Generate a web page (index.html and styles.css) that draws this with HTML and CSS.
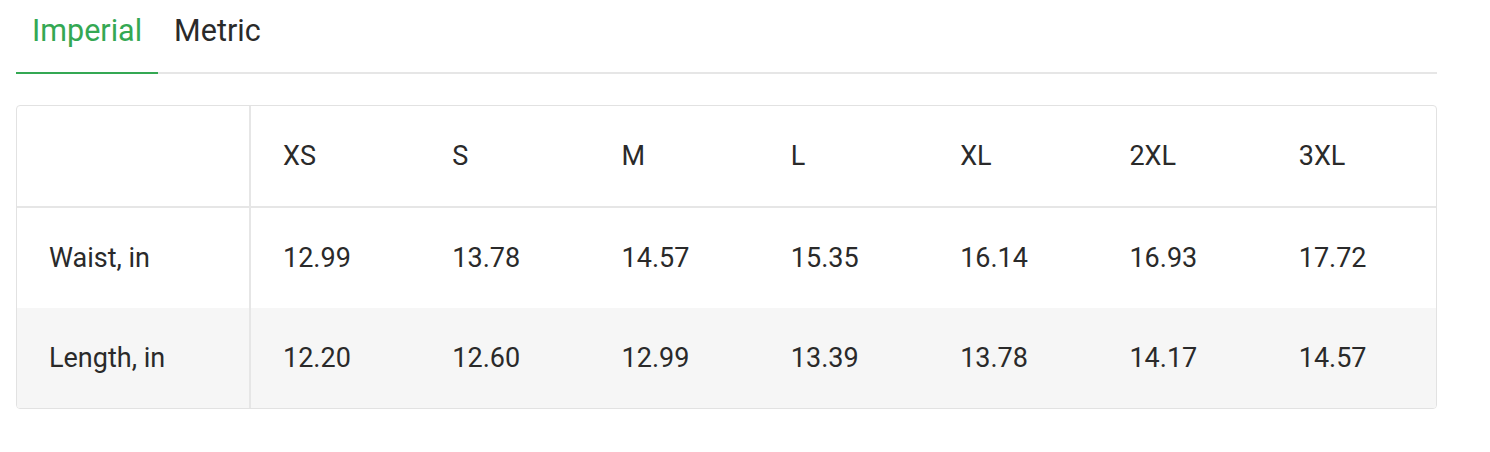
FILE: index.html
```html
<!DOCTYPE html>
<html>
<head>
<meta charset="utf-8">
<link rel="stylesheet" href="styles.css">
</head>
<body>
<div class="page">
  <div class="tabs">
    <div class="tab active">Imperial</div>
    <div class="tab">Metric</div>
  </div>
  <div class="table">
    <div class="row head">
      <div class="cell label"></div>
      <div class="cell">XS</div>
      <div class="cell">S</div>
      <div class="cell">M</div>
      <div class="cell">L</div>
      <div class="cell">XL</div>
      <div class="cell">2XL</div>
      <div class="cell">3XL</div>
    </div>
    <div class="row">
      <div class="cell label">Waist, in</div>
      <div class="cell">12.99</div>
      <div class="cell">13.78</div>
      <div class="cell">14.57</div>
      <div class="cell">15.35</div>
      <div class="cell">16.14</div>
      <div class="cell">16.93</div>
      <div class="cell">17.72</div>
    </div>
    <div class="row alt">
      <div class="cell label">Length, in</div>
      <div class="cell">12.20</div>
      <div class="cell">12.60</div>
      <div class="cell">12.99</div>
      <div class="cell">13.39</div>
      <div class="cell">13.78</div>
      <div class="cell">14.17</div>
      <div class="cell">14.57</div>
    </div>
  </div>
</div>
</body>
</html>
```
FILE: styles.css
```css
* { box-sizing: border-box; }
html, body { margin: 0; padding: 0; background: #fff; }
body { font-family: Roboto, "Liberation Sans", sans-serif; color: #2a2a2a; }
.page { padding: 0 53px 0 16px; width: 1490px; }
.tabs {
  display: flex;
  border-bottom: 2px solid #e6e6e6;
  height: 74px;
}
.tab {
  font-size: 30.5px;
  padding: 13px 16px 0 16px;
  height: 74px;
  margin-bottom: -2px;
  color: #2a2a2a;
}
.tab.active {
  color: #34a853;
  border-bottom: 2px solid #34a853;
}
.table {
  margin-top: 31px;
  border: 1px solid #e2e2e2;
  border-radius: 4px;
  overflow: hidden;
}
.row {
  display: grid;
  grid-template-columns: 234px repeat(7, 1fr);
  height: 100px;
  align-items: stretch;
}
.row.head { height: 102px; border-bottom: 2px solid #e6e6e6; }
.row.alt { background: #f6f6f6; }
.cell {
  font-size: 27px;
  display: flex;
  align-items: center;
  padding-left: 32px;
}
.cell.label { border-right: 2px solid #e6e6e6; padding-left: 32px; }
```
